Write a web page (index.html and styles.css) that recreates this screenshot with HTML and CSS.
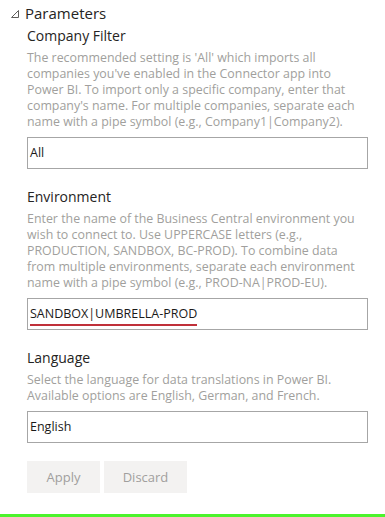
FILE: index.html
```html
<!DOCTYPE html>
<html lang="en">
<head>
  <meta charset="UTF-8">
  <title>Parameters</title>
  <link rel="stylesheet" href="styles.css">
</head>
<body>
<div class="pane">
  <h2 class="pane-title">
    <svg class="caret" width="8" height="8" viewBox="0 0 8 8"><path d="M7.5 0.5 L7.5 7.5 L0.5 7.5 Z" fill="none" stroke="#605e5c" stroke-width="1"/></svg>
    <span>Parameters</span>
  </h2>

  <div class="field">
    <div class="field-label">Company Filter</div>
    <p class="field-desc">The recommended setting is 'All' which imports all<br>companies you've enabled in the Connector app into<br>Power BI. To import only a specific company, enter that<br>company's name. For multiple companies, separate each<br>name with a pipe symbol (e.g., Company1|Company2).</p>
    <div class="field-input">All</div>
  </div>

  <div class="field">
    <div class="field-label">Environment</div>
    <p class="field-desc">Enter the name of the Business Central environment you<br>wish to connect to. Use UPPERCASE letters (e.g.,<br>PRODUCTION, SANDBOX, BC-PROD). To combine data<br>from multiple environments, separate each environment<br>name with a pipe symbol (e.g., PROD-NA|PROD-EU).</p>
    <div class="field-input"><span class="spell">SANDBOX|UMBRELLA-PROD</span></div>
  </div>

  <div class="field">
    <div class="field-label">Language</div>
    <p class="field-desc">Select the language for data translations in Power BI.<br>Available options are English, German, and French.</p>
    <div class="field-input">English</div>
  </div>

  <div class="actions">
    <button class="btn">Apply</button>
    <button class="btn btn-wide">Discard</button>
  </div>
</div>
<div class="bottom-bar"></div>
</body>
</html>
```

FILE: styles.css
```css
* {
  margin: 0;
  padding: 0;
  box-sizing: border-box;
}

body {
  font-family: "Segoe UI", "Open Sans", sans-serif;
  background: #fff;
  color: #252423;
  width: 385px;
  height: 517px;
  display: flex;
  flex-direction: column;
  overflow: hidden;
}

.pane {
  flex: 1;
  padding: 3px 17px 0 11px;
}

.pane-title {
  font-size: 15px;
  font-weight: 400;
  line-height: 20px;
  color: #252423;
  display: flex;
  align-items: center;
  gap: 6px;
}

.caret {
  margin-top: 2px;
}

.field {
  padding-left: 16px;
  margin-bottom: 18px;
}

.field-label {
  font-size: 14px;
  line-height: 20px;
  margin-top: 3px;
  margin-bottom: 4px;
}

.field-desc {
  font-size: 12.4px;
  line-height: 16px;
  color: #a19f9d;
  margin-bottom: 7px;
  white-space: nowrap;
}

.field-input {
  height: 32px;
  border: 1px solid #a6a6a6;
  font-size: 12.5px;
  line-height: 30px;
  padding-left: 2px;
  color: #1b1a19;
}

.spell {
  border-bottom: 2px solid #c0303a;
  padding-bottom: 2px;
}

.actions {
  display: flex;
  gap: 4px;
  padding-left: 16px;
  margin-top: 25px;
}

.field + .actions {
  margin-top: 7px;
}

.btn {
  width: 73px;
  height: 32px;
  border: none;
  background: #f3f2f1;
  color: #a19f9d;
  font-family: inherit;
  font-size: 13px;
}

.btn-wide {
  width: 83px;
}

.bottom-bar {
  height: 3px;
  background: #4cf42c;
}
```
